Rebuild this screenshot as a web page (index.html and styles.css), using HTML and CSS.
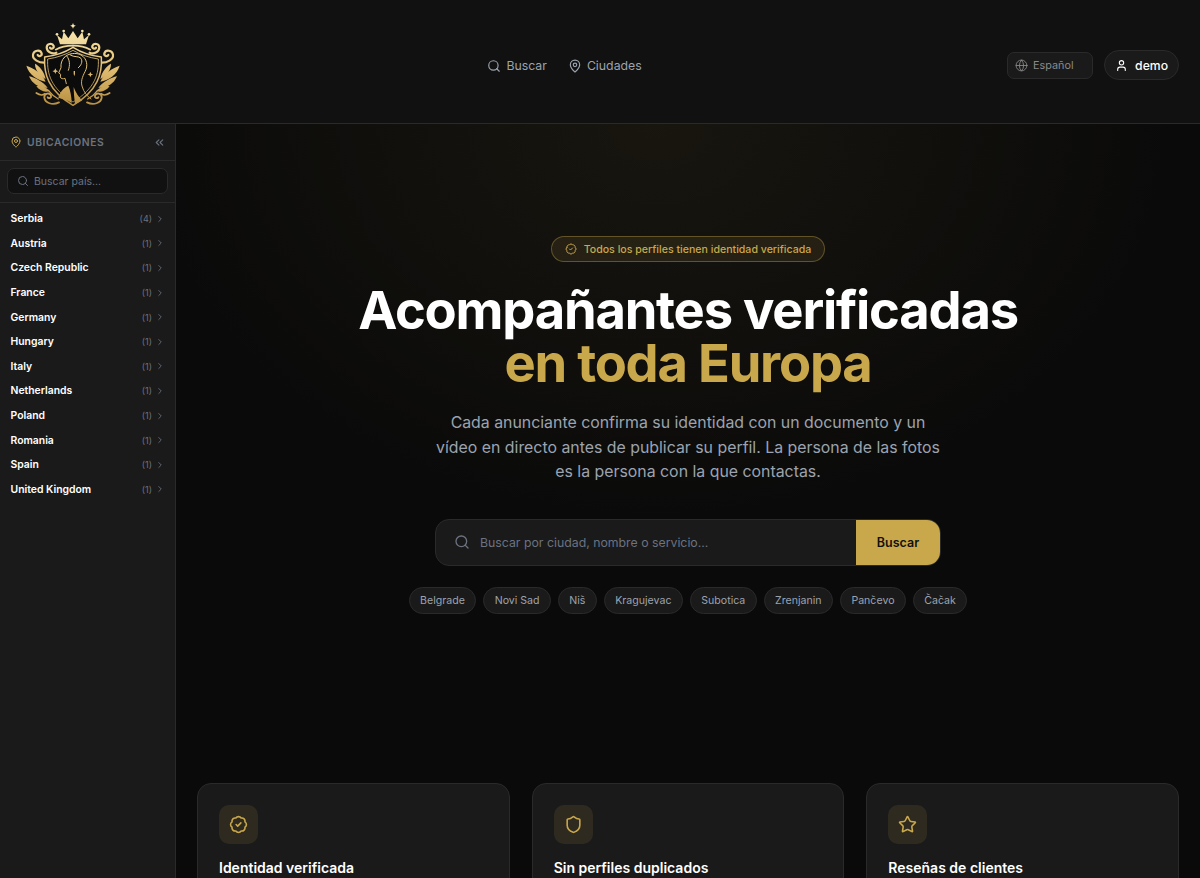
FILE: index.html
```html
<!DOCTYPE html>
<html lang="es">
<head>
<meta charset="utf-8">
<title>Acompañantes verificadas</title>
<link rel="stylesheet" href="styles.css">
</head>
<body>
<svg class="defs" width="0" height="0" aria-hidden="true">
  <defs>
    <linearGradient id="gold" gradientUnits="userSpaceOnUse" x1="0" y1="30" x2="0" y2="275">
      <stop offset="0" stop-color="#fbeab5"/>
      <stop offset=".5" stop-color="#e3c176"/>
      <stop offset="1" stop-color="#b78d3f"/>
    </linearGradient>
    <symbol id="i-search" viewBox="0 0 24 24"><path d="m21 21-4.34-4.34"/><circle cx="11" cy="11" r="8"/></symbol>
    <symbol id="i-pin" viewBox="0 0 24 24"><path d="M20 10c0 4.993-5.539 10.193-7.399 11.799a1 1 0 0 1-1.202 0C9.539 20.193 4 14.993 4 10a8 8 0 0 1 16 0"/><circle cx="12" cy="10" r="3"/></symbol>
    <symbol id="i-chev" viewBox="0 0 24 24"><path d="m9 18 6-6-6-6"/></symbol>
  </defs>
</svg>
<div class="app">
  <header class="topbar">
    <a class="logo" href="#" aria-label="Inicio">
      <svg class="logo-svg" viewBox="0 0 345 300">
        <g id="half">
          <g fill="url(#gold)">
            <path d="M174 88H135L126 60l15 13 5-23 14 20 14-22z"/>
            <circle cx="126" cy="58" r="4"/><circle cx="146" cy="48" r="4"/>
            <path d="M34 152C54 158 82 176 92 200 68 196 42 180 34 152Z"/>
            <path d="M42 184C60 188 84 200 98 218 74 220 52 208 42 184Z"/>
            <path d="M60 146C74 154 88 170 92 192 76 184 60 168 60 146Z"/>
            <path d="M64 214C78 210 94 216 104 228 88 234 74 226 64 214Z"/>
          </g>
          <g fill="none" stroke="url(#gold)" stroke-linecap="round">
            <path stroke-width="5" d="M174 92C156 92 138 95 122 104"/>
            <path stroke-width="6.5" d="M124 113C112 118 96 112 95 98 95 85 112 83 116 93 118 100 108 104 105 98"/>
            <path stroke-width="6.5" d="M90 143C72 144 52 134 54 119 56 105 76 103 80 115 82 123 71 126 68 120"/>
            <path stroke-width="5.5" d="M132 262C112 272 90 264 88 248 87 235 104 231 108 242 110 248 102 252 98 247"/>
            <path stroke-width="5" d="M64 234C74 241 84 241 90 236"/>
            <path stroke-width="4" d="M100 226C106 234 116 244 130 252"/>
          </g>
        </g>
        <use href="#half" transform="matrix(-1 0 0 1 348 0)"/>
        <g fill="#0b0b0b" stroke="url(#gold)" stroke-linejoin="round">
          <path stroke-width="4.5" d="M174 97C150 112 122 122 89 126 86 175 98 226 174 271 250 226 262 175 259 126 226 122 198 112 174 97Z"/>
          <path stroke-width="2.4" d="M174 106C152 119 126 128 98 132 96 176 107 220 174 261 241 220 252 176 250 132 222 128 196 119 174 106Z"/>
        </g>
        <path fill="url(#gold)" d="M174 24l2.500 6 6 2.500-6 2.500-2.500 6-2.500-6-6-2.500 6-2.500zM121 160l2.500 6 6 2.500-6 2.500-2.500 6-2.500-6-6-2.500 6-2.500zM226 170l2.500 6 6 2.500-6 2.500-2.500 6-2.500-6-6-2.500 6-2.500z"/>
        <path fill="url(#gold)" d="M176 168h4v9l-2 7-2-7z"/>
        <g fill="none" stroke="url(#gold)" stroke-width="3" stroke-linecap="round" stroke-linejoin="round">
          <path d="M148 127C140 135 137 146 138 158L131 174 137 178 136 186C138 192 144 192 150 190L154 206"/>
          <path d="M148 127C160 114 184 112 198 120 216 130 220 152 210 170 202 186 196 200 202 216 206 230 216 244 228 252"/>
          <path d="M166 120C178 128 190 122 198 130 204 140 198 152 190 158"/>
          <path d="M156 124C164 134 166 150 160 166"/>
        </g>
        <path fill="url(#gold)" d="M130 248C134 232 146 218 160 212 166 226 170 246 170 264L160 258ZM176 216C182 232 192 248 202 256L180 268C178 250 176 232 176 216Z"/>
      </svg>
    </a>
    <nav class="mainnav">
      <a class="navlink" href="#"><svg class="ico ico-14"><use href="#i-search"/></svg>Buscar</a>
      <a class="navlink" href="#"><svg class="ico ico-14"><use href="#i-pin"/></svg>Ciudades</a>
    </nav>
    <div class="actions">
      <button class="lang">
        <svg class="ico" viewBox="0 0 24 24"><circle cx="12" cy="12" r="10"/><path d="M12 2a14.5 14.5 0 0 0 0 20 14.5 14.5 0 0 0 0-20"/><path d="M2 12h20"/></svg>
        Español
      </button>
      <button class="user">
        <svg class="ico" viewBox="0 0 24 24"><path d="M19 21v-2a4 4 0 0 0-4-4H9a4 4 0 0 0-4 4v2"/><circle cx="12" cy="7" r="4"/></svg>
        demo
      </button>
    </div>
  </header>
  <div class="layout">
    <aside class="sidebar">
      <div class="side-head">
        <span class="side-title"><svg class="ico ico-12 gold"><use href="#i-pin"/></svg>UBICACIONES</span>
        <svg class="ico ico-13 collapse" viewBox="0 0 24 24"><path d="m11 17-5-5 5-5"/><path d="m18 17-5-5 5-5"/></svg>
      </div>
      <div class="side-search">
        <div class="side-input"><svg class="ico ico-12"><use href="#i-search"/></svg><span>Buscar país...</span></div>
      </div>
      <ul class="countries">
        <li><span class="cname">Serbia</span><span class="ccount">(4)</span><svg class="ico ico-10"><use href="#i-chev"/></svg></li>
        <li><span class="cname">Austria</span><span class="ccount">(1)</span><svg class="ico ico-10"><use href="#i-chev"/></svg></li>
        <li><span class="cname">Czech Republic</span><span class="ccount">(1)</span><svg class="ico ico-10"><use href="#i-chev"/></svg></li>
        <li><span class="cname">France</span><span class="ccount">(1)</span><svg class="ico ico-10"><use href="#i-chev"/></svg></li>
        <li><span class="cname">Germany</span><span class="ccount">(1)</span><svg class="ico ico-10"><use href="#i-chev"/></svg></li>
        <li><span class="cname">Hungary</span><span class="ccount">(1)</span><svg class="ico ico-10"><use href="#i-chev"/></svg></li>
        <li><span class="cname">Italy</span><span class="ccount">(1)</span><svg class="ico ico-10"><use href="#i-chev"/></svg></li>
        <li><span class="cname">Netherlands</span><span class="ccount">(1)</span><svg class="ico ico-10"><use href="#i-chev"/></svg></li>
        <li><span class="cname">Poland</span><span class="ccount">(1)</span><svg class="ico ico-10"><use href="#i-chev"/></svg></li>
        <li><span class="cname">Romania</span><span class="ccount">(1)</span><svg class="ico ico-10"><use href="#i-chev"/></svg></li>
        <li><span class="cname">Spain</span><span class="ccount">(1)</span><svg class="ico ico-10"><use href="#i-chev"/></svg></li>
        <li><span class="cname">United Kingdom</span><span class="ccount">(1)</span><svg class="ico ico-10"><use href="#i-chev"/></svg></li>
      </ul>
    </aside>
    <main class="main">
      <section class="hero">
        <div class="badge">
          <svg class="ico ico-12" viewBox="0 0 24 24"><path d="M3.85 8.62a4 4 0 0 1 4.78-4.77 4 4 0 0 1 6.74 0 4 4 0 0 1 4.78 4.78 4 4 0 0 1 0 6.74 4 4 0 0 1-4.77 4.78 4 4 0 0 1-6.75 0 4 4 0 0 1-4.78-4.77 4 4 0 0 1 0-6.76Z"/><path d="m9 12 2 2 4-4"/></svg>
          Todos los perfiles tienen identidad verificada
        </div>
        <h1 class="headline">Acompañantes verificadas<span class="accent">en toda Europa</span></h1>
        <p class="lead">Cada anunciante confirma su identidad con un documento y un vídeo en directo antes de publicar su perfil. La persona de las fotos es la persona con la que contactas.</p>
        <form class="searchbar">
          <div class="search-field"><svg class="ico ico-16"><use href="#i-search"/></svg><span>Buscar por ciudad, nombre o servicio...</span></div>
          <button class="search-btn" type="button">Buscar</button>
        </form>
        <div class="pills">
          <a class="pill" href="#">Belgrade</a>
          <a class="pill" href="#">Novi Sad</a>
          <a class="pill" href="#">Niš</a>
          <a class="pill" href="#">Kragujevac</a>
          <a class="pill" href="#">Subotica</a>
          <a class="pill" href="#">Zrenjanin</a>
          <a class="pill" href="#">Pančevo</a>
          <a class="pill" href="#">Čačak</a>
        </div>
      </section>
      <section class="cards">
        <article class="card">
          <div class="card-icon"><svg class="ico ico-20" viewBox="0 0 24 24"><path d="M3.85 8.62a4 4 0 0 1 4.78-4.77 4 4 0 0 1 6.74 0 4 4 0 0 1 4.78 4.78 4 4 0 0 1 0 6.74 4 4 0 0 1-4.77 4.78 4 4 0 0 1-6.75 0 4 4 0 0 1-4.78-4.77 4 4 0 0 1 0-6.76Z"/><path d="m9 12 2 2 4-4"/></svg></div>
          <h3 class="card-title">Identidad verificada</h3>
        </article>
        <article class="card">
          <div class="card-icon"><svg class="ico ico-20" viewBox="0 0 24 24"><path d="M20 13c0 5-3.500 7.500-7.660 8.950a1 1 0 0 1-.67-.01C7.500 20.500 4 18 4 13V6a1 1 0 0 1 1-1c2 0 4.500-1.200 6.240-2.720a1.170 1.170 0 0 1 1.520 0C14.510 3.810 17 5 19 5a1 1 0 0 1 1 1z"/></svg></div>
          <h3 class="card-title">Sin perfiles duplicados</h3>
        </article>
        <article class="card">
          <div class="card-icon"><svg class="ico ico-20" viewBox="0 0 24 24"><path d="M11.525 2.295a.53.53 0 0 1 .95 0l2.31 4.679a2.123 2.123 0 0 0 1.595 1.16l5.166.756a.53.53 0 0 1 .294.904l-3.736 3.638a2.123 2.123 0 0 0-.611 1.878l.882 5.14a.53.53 0 0 1-.771.56l-4.618-2.428a2.122 2.122 0 0 0-1.973 0L6.396 21.01a.53.53 0 0 1-.77-.56l.881-5.139a2.122 2.122 0 0 0-.611-1.879L2.16 9.795a.53.53 0 0 1 .294-.906l5.165-.755a2.122 2.122 0 0 0 1.597-1.16z"/></svg></div>
          <h3 class="card-title">Reseñas de clientes</h3>
        </article>
      </section>
    </main>
  </div>
</div>
</body>
</html>
```

FILE: styles.css
```css
* { box-sizing: border-box; }
html, body { margin: 0; padding: 0; height: 100%; overflow: hidden; }
body { background: #0a0a0a; color: #fff; font-family: Inter, "Noto Sans", sans-serif; }
a { color: inherit; text-decoration: none; }
button { font-family: inherit; cursor: pointer; }
.defs { display: block; height: 0; }

.ico { fill: none; stroke: currentColor; stroke-width: 2; stroke-linecap: round; stroke-linejoin: round; flex: none; display: block; }
.ico-10 { width: 10px; height: 10px; }
.ico-12 { width: 12px; height: 12px; }
.ico-13 { width: 13px; height: 13px; }
.ico-14 { width: 14px; height: 14px; }
.ico-16 { width: 16px; height: 16px; }
.ico-20 { width: 19px; height: 19px; }
.gold { color: #c9a84c; }

.app { height: 878px; display: flex; flex-direction: column; }

.topbar { height: 124px; flex: none; display: flex; align-items: center; justify-content: space-between; background: #111111; border-bottom: 1px solid #2a2a2a; padding: 0 21px 0 15px; }
.logo { display: block; width: 115px; height: 100px; margin-top: 7px; }
.logo-svg { display: block; width: 115px; height: 100px; }
.mainnav { display: flex; align-items: center; gap: 21px; margin-right: 8px; margin-top: 8px; }
.navlink { display: flex; align-items: center; gap: 5px; font-size: 12.3px; font-weight: 400; color: #9ca3af; line-height: 16px; }
.actions { display: flex; align-items: center; gap: 11px; margin-top: 7px; }
.lang { width: 86px; height: 27px; display: flex; align-items: center; gap: 5px; padding: 0 7px; background: #1a1a1a; border: 1px solid #2a2a2a; border-radius: 7px; color: #8a8a8a; font-size: 10.8px; font-weight: 400; }
.lang .ico { width: 13px; height: 13px; stroke-width: 1.6; }
.user { height: 30px; display: flex; align-items: center; gap: 7px; padding: 0 10px; background: #1a1a1a; border: 1px solid #2a2a2a; border-radius: 15px; color: #fff; font-size: 12.2px; font-weight: 500; }
.user .ico { width: 13px; height: 13px; }

.layout { flex: 1; display: flex; min-height: 0; }

.sidebar { width: 176px; flex: none; background: #1a1a1a; border-right: 1px solid #2a2a2a; }
.side-head { height: 37px; display: flex; align-items: center; justify-content: space-between; padding: 0 9px 0 10px; border-bottom: 1px solid #2a2a2a; }
.side-title { display: flex; align-items: center; gap: 5px; font-size: 10.3px; font-weight: 600; letter-spacing: .6px; color: #6b7280; }
.collapse { color: #6b7280; }
.side-search { height: 42px; padding: 7px 7px 0; border-bottom: 1px solid #2a2a2a; }
.side-input { height: 26px; display: flex; align-items: center; gap: 5px; padding: 0 9px; background: #111111; border: 1px solid #2a2a2a; border-radius: 7px; color: #6b7280; font-size: 10.5px; }
.countries { list-style: none; margin: 0; padding: 3.5px 0 0; }
.countries li { height: 24.6px; display: flex; align-items: center; padding: 0 10px 0 10.5px; color: #6b7280; }
.cname { flex: 1; font-size: 10.4px; font-weight: 600; color: #fff; }
.ccount { font-size: 9px; color: #6b7280; margin-right: 3px; }

.main { flex: 1; min-width: 0; padding: 112px 21px 0; background: radial-gradient(ellipse 520px 400px at 47% 0, rgba(201,168,76,.075), rgba(201,168,76,0) 100%), #0a0a0a; }
.hero { display: flex; flex-direction: column; align-items: center; }
.badge { height: 26px; display: flex; align-items: center; gap: 7px; padding: 0 13px; border: 1px solid rgba(201,168,76,.38); border-radius: 13px; background: rgba(201,168,76,.1); color: #c9a84c; font-size: 10.6px; font-weight: 500; }
.headline { margin: 22px 0 0; font-size: 52.5px; line-height: 53px; font-weight: 700; letter-spacing: -1.22px; text-align: center; color: #fff; }
.accent { display: block; color: #c9a84c; }
.lead { margin: 21px 0 0; width: 520px; font-size: 15.87px; line-height: 24.5px; color: #9ca3af; text-align: center; font-weight: 400; }
.searchbar { margin: 34px 0 0; width: 506px; height: 47px; display: flex; background: #1a1a1a; border: 1px solid #2a2a2a; border-radius: 14px; overflow: hidden; }
.search-field { flex: 1; display: flex; align-items: center; gap: 10px; padding-left: 18px; color: #6b7280; font-size: 12.3px; }
.search-btn { width: 84px; height: 100%; border: 0; background: #c9a84c; color: #111; font-size: 12.5px; font-weight: 600; }
.pills { margin-top: 21px; display: flex; gap: 7px; }
.pill { height: 27px; display: flex; align-items: center; padding: 0 10.4px; background: #1a1a1a; border: 1px solid #2a2a2a; border-radius: 14px; color: #9ca3af; font-size: 10.6px; }

.cards { margin-top: 169px; display: grid; grid-template-columns: repeat(3, 1fr); gap: 22px; }
.card { height: 200px; padding: 21px; background: #1a1a1a; border: 1px solid #2a2a2a; border-radius: 14px; }
.card-icon { width: 39px; height: 39px; border-radius: 10px; background: rgba(201,168,76,.12); color: #c9a84c; display: flex; align-items: center; justify-content: center; }
.card-title { margin: 15px 0 0; font-size: 14px; line-height: 18px; font-weight: 600; color: #fff; }
```
